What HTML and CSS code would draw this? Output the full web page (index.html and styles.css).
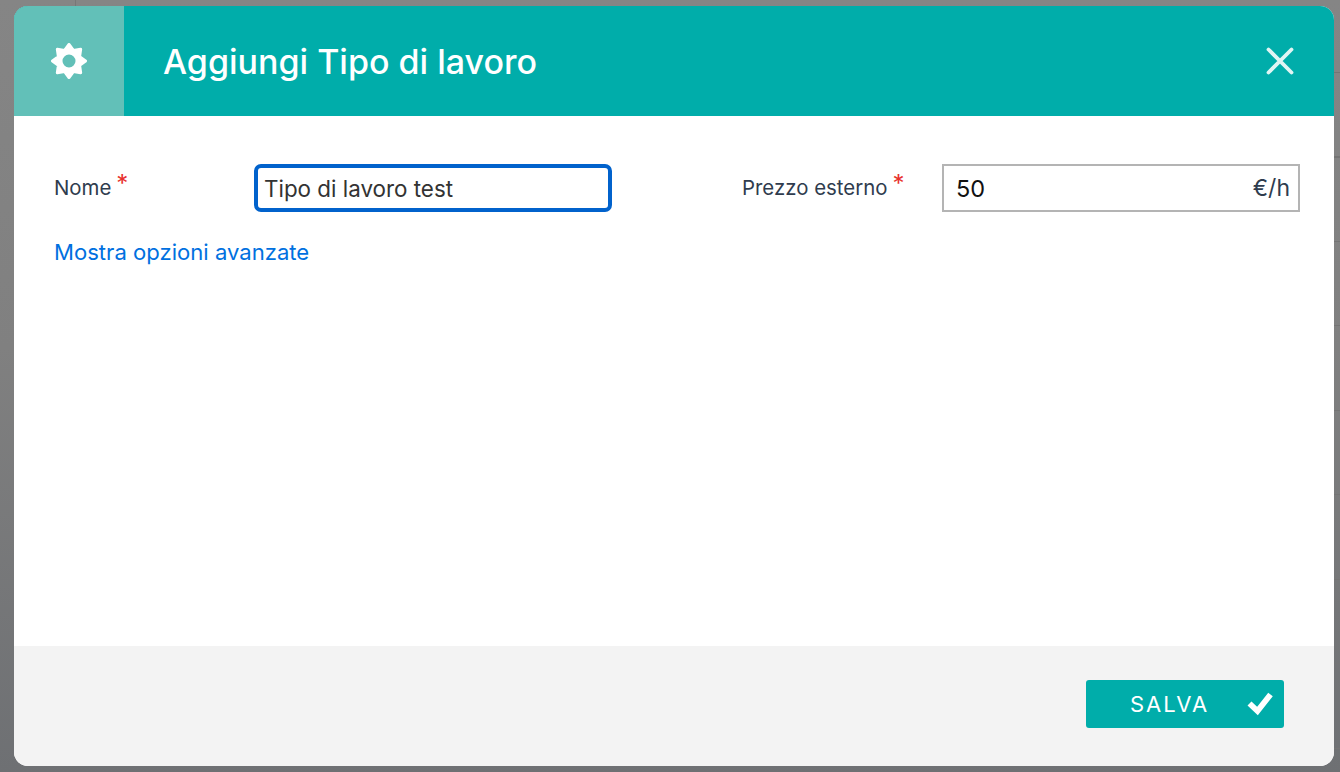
FILE: index.html
```html
<!DOCTYPE html>
<html lang="it">
<head>
<meta charset="utf-8">
<title>Aggiungi Tipo di lavoro</title>
<link rel="stylesheet" href="styles.css">
</head>
<body>
<div class="backdrop">
  <div class="modal">
    <header class="modal-header">
      <div class="header-icon">
        <svg class="gear" viewBox="0 0 36 36" width="36" height="36" aria-hidden="true">
          <path fill="#fff" stroke="#fff" stroke-width="3" stroke-linejoin="round" fill-rule="evenodd" d="M18 1.500L22.400 7.380L29.670 6.330L28.620 13.600L34.500 18L28.620 22.400L29.670 29.670L22.400 28.620L18 34.500L13.600 28.620L6.330 29.670L7.380 22.400L1.500 18L7.380 13.600L6.330 6.330L13.600 7.380ZM18 10a8 8 0 1 0 0 16a8 8 0 0 0 0-16Z"/>
        </svg>
      </div>
      <h1 class="modal-title">Aggiungi Tipo di lavoro</h1>
      <button class="close" type="button" aria-label="Chiudi">
        <svg viewBox="0 0 28 28" width="28" height="28" aria-hidden="true">
          <path d="M2.500 2.500L25.500 25.500M25.500 2.500L2.500 25.500" stroke="#e0f5f4" stroke-width="3.800" stroke-linecap="round" fill="none"/>
        </svg>
      </button>
    </header>
    <main class="modal-body">
      <div class="form-row">
        <div class="field field-name">
          <label class="label label-name">Nome<span class="req">*</span></label>
          <div class="input input-focus">Tipo di lavoro test</div>
        </div>
        <div class="field field-price">
          <label class="label label-price">Prezzo esterno<span class="req">*</span></label>
          <div class="input input-price"><span class="value">50</span><span class="unit">€/h</span></div>
        </div>
      </div>
      <a class="advanced" href="#">Mostra opzioni avanzate</a>
    </main>
    <footer class="modal-footer">
      <button class="save" type="button">
        <span class="save-text">SALVA</span>
        <svg class="check" viewBox="0 0 26 24" width="26" height="24" aria-hidden="true">
          <path d="M2.500 11.500L10.500 19L23.500 2.500" stroke="#fff" stroke-width="5.800" fill="none"/>
        </svg>
      </button>
    </footer>
  </div>
</div>
</body>
</html>
```
FILE: styles.css
```css
* { box-sizing: border-box; }
html, body { margin: 0; padding: 0; height: 100%; }
body {
  font-family: "Inter", "Open Sans", sans-serif;
  background: #808080;
  overflow: hidden;
}
.backdrop {
  position: relative;
  width: 1340px;
  height: 772px;
  padding: 6px 6px 6px 14px;
  background: linear-gradient(#858585, #808080 45%, #6e7073);
}
.backdrop::before {
  content: "";
  position: absolute;
  left: 75px;
  top: 0;
  width: 1px;
  height: 6px;
  background: #777;
}
.backdrop::after {
  content: "";
  position: absolute;
  right: 0;
  top: 0;
  width: 6px;
  height: 772px;
  background: repeating-linear-gradient(transparent 0, transparent 72px, #747474 72px, #747474 73px, transparent 73px, transparent 84.500px);
}
.modal {
  width: 1320px;
  height: 760px;
  border-radius: 14px;
  overflow: hidden;
  background: #fff;
  display: flex;
  flex-direction: column;
}
.modal-header {
  height: 110px;
  flex: none;
  background: #00adaa;
  display: flex;
  align-items: center;
}
.header-icon {
  width: 110px;
  height: 110px;
  background: #62c0b8;
  display: flex;
  align-items: center;
  justify-content: center;
}
.modal-title {
  margin: 0 0 0 39px;
  flex: 1;
  font-size: 34px;
  font-weight: 500;
  color: #fff;
}
.close {
  width: 28px;
  height: 28px;
  padding: 0;
  margin-right: 40px;
  border: 0;
  background: none;
  display: flex;
}
.modal-body {
  flex: 1;
  padding: 48px 34px 0 40px;
}
.form-row {
  display: flex;
  justify-content: space-between;
}
.field { display: flex; }
.label {
  font-size: 20.400px;
  color: #2f3c4e;
  display: flex;
  line-height: 48px;
}
.label-name { width: 200px; }
.label-price { width: 200px; }
.req {
  color: #e8322e;
  margin-left: 5px;
  font-size: 24px;
  line-height: 40px;
}
.input {
  height: 48px;
  font-size: 22.400px;
  display: flex;
  align-items: center;
}
.input-focus {
  width: 358px;
  border: 4px solid #0162cc;
  border-radius: 7px;
  padding-left: 6px;
  color: #333;
}
.input-price {
  width: 358px;
  border: 2px solid #b4b4b4;
  padding: 0 8px 0 12px;
  color: #111;
  justify-content: space-between;
}
.value { font-size: 23.500px; }
.unit { color: #2f3c4e; font-size: 23px; }
.advanced {
  display: block;
  margin-top: 24px;
  font-size: 22.100px;
  line-height: 32px;
  color: #0070e0;
  text-decoration: none;
}
.modal-footer {
  height: 120px;
  flex: none;
  background: #f3f3f3;
  display: flex;
  justify-content: flex-end;
  padding: 34px 50px 0 0;
}
.save {
  width: 198px;
  height: 48px;
  border: 0;
  border-radius: 3px;
  background: #00adaa;
  color: #fff;
  font-family: inherit;
  font-size: 22px;
  letter-spacing: 2px;
  display: flex;
  align-items: center;
  padding: 0 11px 0 44px;
  justify-content: space-between;
}
.check { filter: blur(0.7px); }
```
